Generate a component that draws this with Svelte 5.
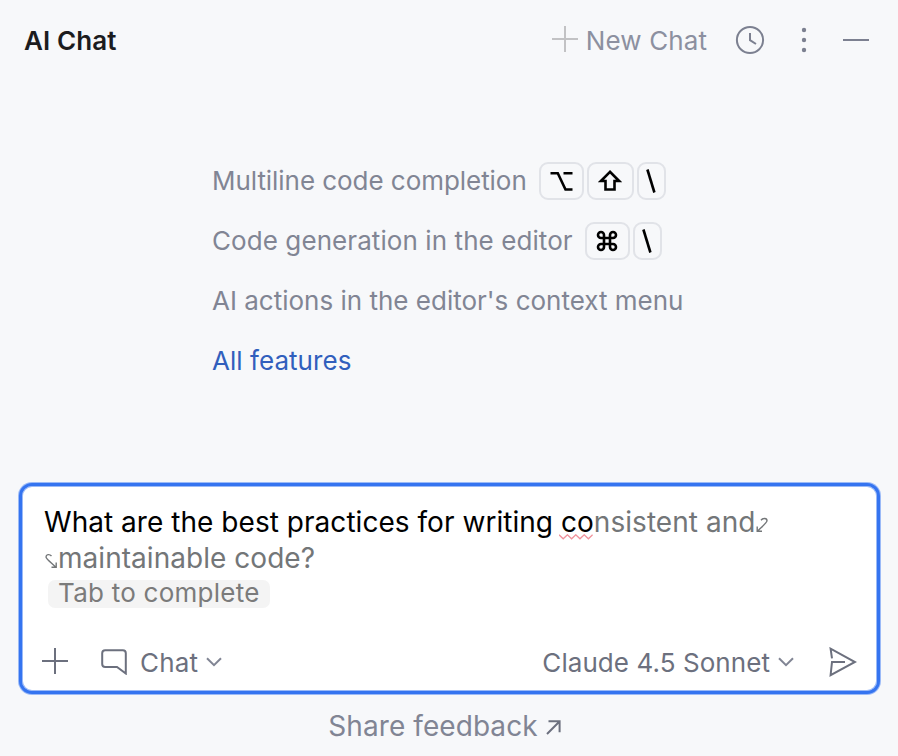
<script>
  const option = 'M.5 2.2H7.8L15.5 18.5H22.5M13.5 2.2H22.5';
</script>

{#snippet chevron()}
  <svg class="chevron" width="16" height="10" viewBox="0 0 16 10"><path d="M1 1.2L8 8.2L15 1.2" /></svg>
{/snippet}

<main class="panel">
  <header>
    <h1>AI Chat</h1>
    <button class="new">
      <svg width="26" height="26" viewBox="0 0 26 26"><path d="M13 0V26M0 13H26" /></svg>
      <span>New Chat</span>
    </button>
    <svg class="clock" width="30" height="30" viewBox="0 0 30 30"><circle cx="15" cy="15" r="13.1" /><path d="M15 8V15.2L21 19" /></svg>
    <svg class="dots" width="6" height="26" viewBox="0 0 6 26"><circle cx="3" cy="3" r="2.2" /><circle cx="3" cy="13" r="2.2" /><circle cx="3" cy="23" r="2.2" /></svg>
    <svg class="minus" width="26" height="2" viewBox="0 0 26 2"><path d="M0 1H26" /></svg>
  </header>

  <section class="features">
    <div class="row">
      <span class="t1">Multiline code completion</span>
      <span class="keys">
        <kbd style:width="45px"><svg width="23" height="20" viewBox="0 0 23 20"><path d={option} /></svg></kbd>
        <kbd style:width="47px"><svg width="24" height="22" viewBox="0 0 24 22"><path d="M12 1.8L2.9 11H7.5V19.5H16.5V11H21.1Z" /></svg></kbd>
        <kbd style:width="29px"><svg width="10" height="24" viewBox="0 0 10 24"><path d="M1.4 .5L8.4 23.5" /></svg></kbd>
      </span>
    </div>
    <div class="row">
      <span class="t2">Code generation in the editor</span>
      <span class="keys">
        <kbd style:width="45px"><svg width="22" height="22" viewBox="0 0 22 22"><path d="M8 8V5A3 3 0 1 0 5 8H17A3 3 0 1 0 14 5V17A3 3 0 1 0 17 14H5A3 3 0 1 0 8 17Z" /></svg></kbd>
        <kbd style:width="29px"><svg width="10" height="24" viewBox="0 0 10 24"><path d="M1.4 .5L8.4 23.5" /></svg></kbd>
      </span>
    </div>
    <div class="row"><span class="t3">AI actions in the editor's context menu</span></div>
    <div class="row"><a href="#features">All features</a></div>
  </section>

  <section class="composer">
    <div class="text">
      <div class="line"><span>What are the best practices for writing <span class="typo">co<svg width="34" height="6" viewBox="0 0 34 6"><path d="M0 .8L4.2 4.8L8.4 .8L12.6 4.8L16.8 .8L21 4.8L25.2 .8L29.4 4.8L33.6 .8" /></svg></span><span class="ghost">nsistent and</span></span><svg class="wrap" width="12" height="16" viewBox="0 0 12 16"><path d="M5 3.2C7 .8 11 .8 11 3.8C11 5.5 9.5 6.5 1.5 14.2M1.2 9.5V14.3H6" /></svg></div>
      <div class="line ghost"><svg class="wrap start" width="13" height="16" viewBox="0 0 13 16"><path d="M6.5 3C4.5 .8 1 1.2 1 4C1 5.5 2.5 6.5 10.8 14.2M11.2 9.5V14.3H6.5" /></svg><span>maintainable code?</span></div>
      <div class="hint">Tab to complete</div>
    </div>
    <div class="tools">
      <svg class="plus" width="26" height="26" viewBox="0 0 26 26"><path d="M13 0V26M0 13H26" /></svg>
      <svg class="bubble" width="26" height="26" viewBox="0 0 26 26"><path d="M4.2 1.2H21.8Q24.8 1.2 24.8 4.2V24.5L16 18H4.2Q1.2 18 1.2 15V4.2Q1.2 1.2 4.2 1.2Z" /></svg>
      <span class="mode">Chat</span>
      {@render chevron()}
      <span class="model">Claude 4.5 Sonnet</span>
      {@render chevron()}
      <svg class="send" width="28" height="30" viewBox="0 0 28 30"><path d="M3 11.4L1.6 1.7L26 15L1.6 28.2L3 15H16" /></svg>
    </div>
  </section>

  <footer>
    <span>Share feedback</span>
    <svg width="15" height="15" viewBox="0 0 15 15"><path d="M1 14L13.2 1.8M2.5 1.2H13.6V12.3" /></svg>
  </footer>
</main>

<style>
  :global(body) { margin: 0; background: #f7f8fa; }
  .panel {
    display: flex; flex-direction: column; box-sizing: border-box;
    width: 898px; height: 756px; overflow: hidden;
    background: #f7f8fa; color: #818594;
    font: 26px/36px Inter, "Liberation Sans", sans-serif;
  }
  span, a, .hint { white-space: pre; }
  svg { display: block; flex: none; fill: none; stroke: #6c707e; stroke-width: 2; }
  header { display: flex; align-items: center; height: 80px; padding: 0 29px 0 24px; box-sizing: border-box; }
  h1 { margin: 0; font-size: 26px; font-weight: 600; color: #1c1c1e; line-height: 36px; letter-spacing: .1px; padding-top: 2px; }
  .new { display: flex; align-items: center; gap: 8px; margin-left: auto; padding: 0; border: 0; background: none; font: inherit; color: #8c90a0; }
  .new span { padding-top: 2px; letter-spacing: .1px; }
  .new svg { stroke: #c2c2c4; margin-top: -2px; }
  .clock { margin-left: 28px; stroke: #7c8090; }
  .dots { margin-left: 36px; fill: #7c8090; stroke: none; }
  .minus { margin-left: 36px; stroke: #7c8090; }
  .features { margin: 71px 0 0 212px; }
  .row { display: flex; align-items: center; height: 60px; }
  .t1 { letter-spacing: -.05px; }
  .t2 { letter-spacing: .08px; }
  .keys { display: flex; gap: 3px; margin-left: 12px; }
  kbd { display: flex; align-items: center; justify-content: center; box-sizing: border-box; height: 38px; border: 2px solid #e1e3e8; border-radius: 9px; }
  kbd svg { stroke: #000; stroke-width: 2.6; }
  a { color: #315fbd; text-decoration: none; letter-spacing: .05px; }
  .composer {
    display: flex; flex-direction: column; box-sizing: border-box; width: 861px; height: 211px;
    margin: 92px 0 0 19px; border: 3px solid #3574f0; border-radius: 13px;
    background: #fff; box-shadow: 0 0 0 1px #9bbaf7, inset 0 0 0 1px #9bbaf7;
  }
  .text { padding: 18px 0 0 22px; color: #000; }
  .line { display: flex; align-items: center; height: 36px; font-size: 28px; letter-spacing: .04px; }
  .ghost { color: #737678; }
  .typo { position: relative; }
  .typo svg { position: absolute; left: -2px; bottom: -1px; stroke: #f0929b; stroke-width: 1.3; }
  .wrap { stroke: #737678; stroke-width: 1.4; margin: 5px 0 0 1px; }
  .hint { width: 222px; height: 28px; margin: 4px 0 0 4px; padding-left: 10px; box-sizing: border-box; border-radius: 7px; background: #f4f4f4; color: #7b7b7b; line-height: 26px; letter-spacing: .25px; }
  .tools { display: flex; align-items: center; height: 36px; margin: auto 20px 11px 20px; color: #6c707e; }
  .plus { margin-top: -2px; }
  .bubble { margin-left: 33px; }
  .mode { margin: 2px 0 0 13px; letter-spacing: .2px; }
  .chevron { margin-left: 8px; stroke: #818594; }
  .model { margin: 2px 0 0 auto; letter-spacing: .07px; }
  .send { margin-left: 35px; }
  footer { display: flex; align-items: center; justify-content: center; gap: 8px; margin-top: 14px; font-size: 28px; letter-spacing: .07px; padding-right: 9px; }
  footer svg { margin-top: 2px; }
</style>
